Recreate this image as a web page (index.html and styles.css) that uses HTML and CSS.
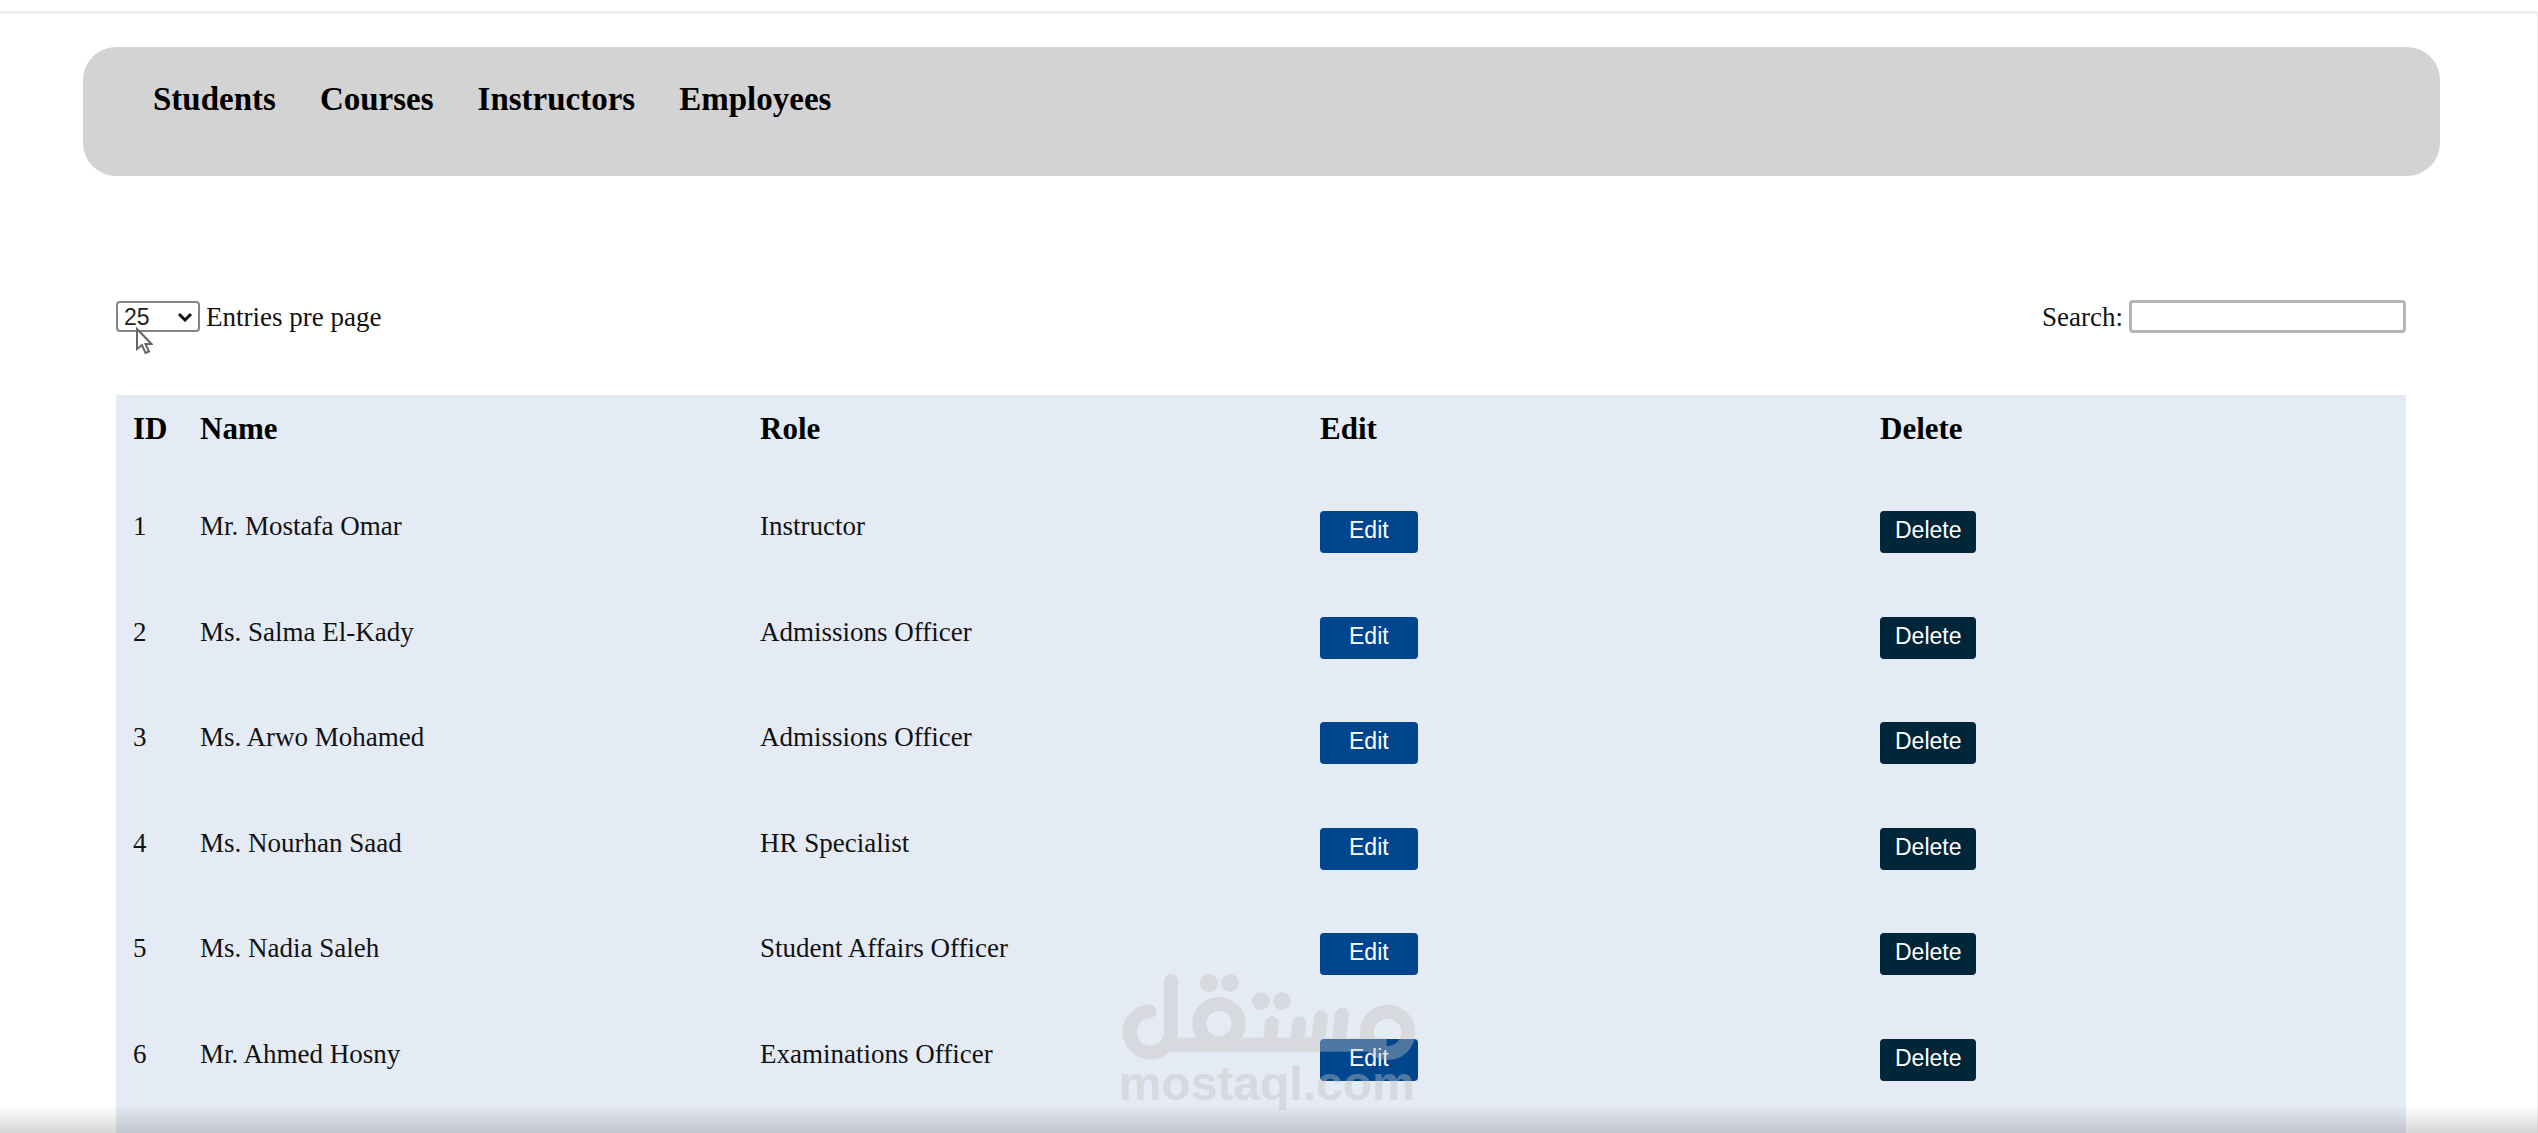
FILE: index.html
```html
<!DOCTYPE html>
<html lang="en">
<head>
<meta charset="utf-8">
<title>Employees</title>
<link rel="stylesheet" href="styles.css">
</head>
<body>
<div class="top-rule"></div>
<div class="page">
  <nav class="nav">
    <a href="#students">Students</a>
    <a href="#courses">Courses</a>
    <a href="#instructors">Instructors</a>
    <a href="#employees">Employees</a>
  </nav>
  <main class="content">
    <div class="toolbar">
      <div class="field">
        <select id="entries" class="entries">
          <option>10</option>
          <option selected>25</option>
          <option>50</option>
          <option>100</option>
        </select>
        <label for="entries">Entries pre page</label>
        <svg class="cursor" viewBox="0 0 18 28" aria-hidden="true"><path d="M2 2V22L7 18L10.500 26L14 24.500L10.500 17H16.500Z"/></svg>
      </div>
      <div class="field">
        <label for="search">Search:</label>
        <input id="search" class="search" type="search">
      </div>
    </div>
    <section class="panel">
      <table class="staff">
        <colgroup><col class="col-id"><col><col><col><col></colgroup>
        <thead>
          <tr><th>ID</th><th>Name</th><th>Role</th><th>Edit</th><th>Delete</th></tr>
        </thead>
        <tbody>
          <tr><td>1</td><td>Mr. Mostafa Omar</td><td>Instructor</td><td><button class="btn edit">Edit</button></td><td><button class="btn delete">Delete</button></td></tr>
          <tr><td>2</td><td>Ms. Salma El-Kady</td><td>Admissions Officer</td><td><button class="btn edit">Edit</button></td><td><button class="btn delete">Delete</button></td></tr>
          <tr><td>3</td><td>Ms. Arwo Mohamed</td><td>Admissions Officer</td><td><button class="btn edit">Edit</button></td><td><button class="btn delete">Delete</button></td></tr>
          <tr><td>4</td><td>Ms. Nourhan Saad</td><td>HR Specialist</td><td><button class="btn edit">Edit</button></td><td><button class="btn delete">Delete</button></td></tr>
          <tr><td>5</td><td>Ms. Nadia Saleh</td><td>Student Affairs Officer</td><td><button class="btn edit">Edit</button></td><td><button class="btn delete">Delete</button></td></tr>
          <tr><td>6</td><td>Mr. Ahmed Hosny</td><td>Examinations Officer</td><td><button class="btn edit">Edit</button></td><td><button class="btn delete">Delete</button></td></tr>
        </tbody>
      </table>
    </section>
  </main>
</div>
<svg class="watermark" viewBox="0 0 900 420" role="img" aria-label="mostaql.com">
  <g class="watermark-ink">
    <g class="strokes">
      <path d="M88 115A62 62 0 1 0 153 178V24"/>
      <path class="bar" d="M130 215H800"/>
      <circle cx="297" cy="152" r="59"/>
      <circle cx="803" cy="178" r="62"/>
      <path d="M456 151L450 205M538 151L531 205M603 134L594 205M666 125L656 205"/>
    </g>
    <circle cx="267" cy="30" r="27"/>
    <circle cx="330" cy="30" r="27"/>
    <circle cx="423" cy="84" r="27"/>
    <circle cx="486" cy="84" r="27"/>
    <text x="-4" y="380">mostaql.com</text>
  </g>
</svg>
<div class="bottom-shade"></div>
</body>
</html>
```
FILE: styles.css
```css
* {
  box-sizing: border-box;
}

body {
  margin: 0;
  min-height: 100vh;
  display: flex;
  flex-direction: column;
  padding-top: 11px;
  background: #fff;
  color: #111;
  font: 27px/30px "Liberation Serif", "Times New Roman", serif;
}

.top-rule {
  height: 3px;
  background: #efefef;
}

.page {
  flex: 1;
  display: flex;
  flex-direction: column;
  padding: 33px 97px 0 83px;
  border-right: 1px solid #efefef;
}

.nav {
  display: flex;
  gap: 44px;
  height: 129px;
  padding: 34px 70px;
  border-radius: 33px;
  background: #d3d3d3;
  font-size: 33px;
  line-height: 37px;
  font-weight: bold;
}

.nav a {
  color: #000;
  text-decoration: none;
}

.content {
  flex: 1;
  display: flex;
  flex-direction: column;
  padding: 124px 34px 0 33px;
}

.toolbar {
  display: flex;
  justify-content: space-between;
  height: 95px;
}

.field {
  position: relative;
  display: flex;
  align-items: center;
  gap: 6px;
  height: 33px;
}

.entries {
  appearance: none;
  width: 84px;
  height: 31px;
  padding: 0 6px;
  border: 2px solid #858585;
  border-radius: 4px;
  color: #222;
  background: #fff url("data:image/svg+xml,%3Csvg xmlns='http://www.w3.org/2000/svg' viewBox='0 0 16 10'%3E%3Cpath d='M2 2l6 6 6-6' fill='none' stroke='%23111' stroke-width='3'/%3E%3C/svg%3E") no-repeat right 5px center / 16px 10px;
  font: 23px/26px "Liberation Sans", Arial, sans-serif;
}

.search {
  width: 277px;
  height: 33px;
  padding: 0 4px;
  border: 3px solid #b5b5b5;
  border-radius: 4px;
  background: #fff;
  font: 23px/26px "Liberation Sans", Arial, sans-serif;
}

.cursor {
  position: absolute;
  left: 19px;
  top: 27px;
  width: 18px;
  height: 28px;
  fill: #fff;
  stroke: #666;
  stroke-width: 2;
}

.panel {
  flex: 1;
  padding-left: 17px;
  background: #e5ebf4;
}

/* Equal columns; the last one's right gutter runs past the panel. */
.staff {
  width: calc(100% + 34px);
  table-layout: fixed;
  border-collapse: collapse;
}

.col-id {
  width: 67px;
}

.staff th,
.staff td {
  padding: 17px 0 0;
  text-align: left;
  vertical-align: top;
}

.staff th {
  height: 99px;
  color: #000;
  font-size: 31px;
  line-height: 34px;
}

.staff td {
  height: 106px;
}

.staff tr:nth-child(even) td {
  height: 105px;
}

.btn {
  display: block;
  height: 42px;
  padding: 0 15px 4px;
  border: 0;
  border-radius: 4px;
  color: #fff;
  font: 23px/38px "Liberation Sans", Arial, sans-serif;
}

.edit {
  padding-inline: 29px;
  background: #00468f;
}

.delete {
  background: #002639;
}

.watermark {
  position: absolute;
  left: 1120px;
  top: 973px;
  width: 300px;
  height: 140px;
  pointer-events: none;
}

.watermark-ink {
  opacity: 0.4;
  fill: #c4c0be;
}

.strokes {
  fill: none;
  stroke: #c4c0be;
  stroke-width: 42;
  stroke-linecap: round;
}

.bar {
  stroke-linecap: butt;
}

.watermark text {
  font: bold 144px "Liberation Sans", Arial, sans-serif;
}

.bottom-shade {
  position: fixed;
  inset: auto 0 0;
  height: 28px;
  background: linear-gradient(rgba(0, 0, 0, 0), rgba(0, 0, 0, 0.16));
  pointer-events: none;
}
```
